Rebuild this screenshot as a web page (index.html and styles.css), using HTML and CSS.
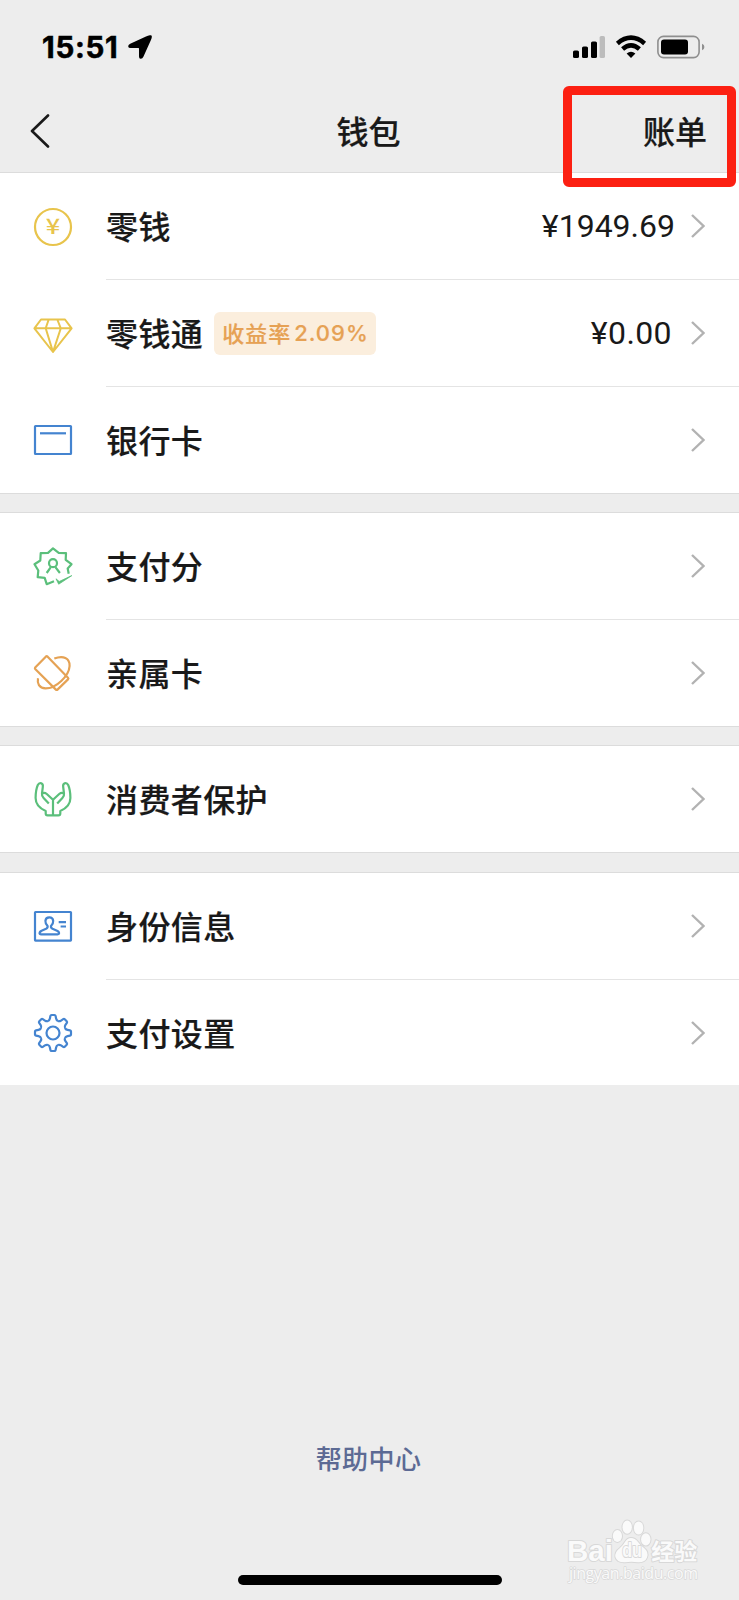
FILE: index.html
```html
<!DOCTYPE html>
<html lang="zh-CN">
<head>
    <meta charset="UTF-8">
    <meta name="viewport" content="width=device-width, initial-scale=1.0">
    <title>钱包</title>
    <link rel="stylesheet" href="styles.css">
</head>
<body>
    <div class="phone">
        <div class="status-bar">
            <span class="time">15:51</span>
            <svg class="location" width="26" height="26" viewBox="0 0 26 26">
                <path d="M22.8 1.3 Q25.4 .6 24.8 3.2 Q24.5 5 23.6 6.8 L16.4 22.8 Q15.4 25 13.6 24.8 Q12 24.5 12 22.4 V14.6 Q12 14 11.4 14 H3.6 Q1.4 14 1.2 12.4 Q1 10.8 3.2 9.8 L19 2.5 Q21 1.6 22.8 1.3 Z"/>
            </svg>
            <div class="status-icons">
                <svg width="32" height="22" viewBox="0 0 32 22">
                    <rect x="0" y="14.5" width="6" height="7.5" rx="1.6"/>
                    <rect x="9" y="10.5" width="6" height="11.5" rx="1.6"/>
                    <rect x="18" y="5.5" width="6" height="16.5" rx="1.6"/>
                    <rect x="26.6" y="0" width="5.4" height="22" rx="1.6" fill="#bcbcbc"/>
                </svg>
                <svg class="wifi" width="32" height="24" viewBox="0 0 32 24">
                    <path d="M2.4 8.4 Q16 -3 29.6 8.4 M7.6 14 Q16 6.8 24.4 14" fill="none" stroke="#000" stroke-width="4.6"/>
                    <path d="M16 23 L11.6 18.4 Q16 15 20.4 18.4 Z"/>
                </svg>
                <svg width="48" height="24" viewBox="0 0 48 24">
                    <rect x=".9" y="1.4" width="41.2" height="21.2" rx="5.6" fill="none" stroke="#8f8f8f" stroke-width="1.6"/>
                    <rect x="4" y="4.6" width="27" height="15" rx="3"/>
                    <path d="M45 8.8 Q47.4 9.6 47.4 12 Q47.4 14.4 45 15.2 Z" fill="#8f8f8f"/>
                </svg>
            </div>
        </div>

        <div class="nav-bar">
            <svg class="back" width="20" height="34" viewBox="0 0 20 34">
                <path d="M18 1.5 L2 17 L18 32.5"/>
            </svg>
            <h1 class="title">钱包</h1>
            <a class="bill">账单</a>
            <div class="highlight"></div>
        </div>

        <div class="group">
            <div class="row">
                <svg class="icon yellow" viewBox="0 0 40 40">
                    <circle cx="20" cy="20" r="18"/>
                    <text class="yen" x="12.8" y="27" textLength="14.4" lengthAdjust="spacingAndGlyphs">¥</text>
                </svg>
                <div class="cell">
                    <span class="label">零钱</span>
                    <span class="amount">¥1949.69</span>
                    <svg class="arrow" viewBox="0 0 14 24"><path d="M1 1 L12.5 12 L1 23"/></svg>
                </div>
            </div>
            <div class="row">
                <svg class="icon yellow thin" viewBox="0 0 40 40">
                    <path d="M8 5.5 H32 L38.6 14.3 L20 38 L1.4 14.3 Z M1.4 14.3 H38.6 M15.7 5.5 L12.7 14.3 L20 38 L27.8 14.3 L24.3 5.5"/>
                </svg>
                <div class="cell">
                    <span class="label">零钱通</span>
                    <span class="tag"><span class="tag-text">收益率</span><span class="rate">2.09%</span></span>
                    <span class="amount zero">¥0.00</span>
                    <svg class="arrow" viewBox="0 0 14 24"><path d="M1 1 L12.5 12 L1 23"/></svg>
                </div>
            </div>
            <div class="row">
                <svg class="icon blue" viewBox="0 0 40 40">
                    <rect x="2" y="6" width="36" height="28" rx=".5"/>
                    <path d="M7 13.3 H33"/>
                </svg>
                <div class="cell">
                    <span class="label">银行卡</span>
                    <svg class="arrow" viewBox="0 0 14 24"><path d="M1 1 L12.5 12 L1 23"/></svg>
                </div>
            </div>
        </div>

        <div class="group">
            <div class="row">
                <svg class="icon green" viewBox="0 0 40 40">
                    <path d="M21 34.2 L13.7 37.2 L11.7 30.8 L4.7 30.2 L5.3 23.5 L1.5 17.2 L7.3 13.5 L7.7 6.2 L15 5.8 L20 1.4 L25.7 5.8 L33 6.2 L32.7 12.8 L38.5 17.2 L34.7 21.5 L35.7 26.8"/>
                    <circle cx="20" cy="16.2" r="4"/>
                    <path d="M13.7 26 L17.8 20.2 M26.9 26 L22.4 20.2"/>
                    <path class="solid" d="M23 31.8 L26.2 34.5 L38.8 28.6 L25.7 37.2 Z"/>
                </svg>
                <div class="cell">
                    <span class="label">支付分</span>
                    <svg class="arrow" viewBox="0 0 14 24"><path d="M1 1 L12.5 12 L1 23"/></svg>
                </div>
            </div>
            <div class="row">
                <svg class="icon orange" viewBox="0 0 40 40">
                    <path d="M13 3.4 L2.2 14.4 Q1.6 15.2 2.2 16 L22.9 36.6 Q23.7 37.4 24.5 36.6 L35 26.4 Q35.8 25.6 35 24.8 L14.4 3.4 Q13.7 2.8 13 3.4 Z"/>
                    <path d="M21.3 5.6 C30 2 37 5 36.6 13 C36 23 23 35.5 12.5 35.4 C6 35 4 30.5 5 25.3"/>
                </svg>
                <div class="cell">
                    <span class="label">亲属卡</span>
                    <svg class="arrow" viewBox="0 0 14 24"><path d="M1 1 L12.5 12 L1 23"/></svg>
                </div>
            </div>
        </div>

        <div class="group">
            <div class="row">
                <svg class="icon green" viewBox="0 0 40 40">
                    <path d="M20 36.3 H14.5 Q12.7 36.3 12.7 34.5 V32 C7 29.5 2.6 25.5 2.6 19 Q2.6 11 4.8 6 Q6 3.6 8.3 4.2 Q10.3 5 9.8 8 L9 14.5 Q11.5 13.2 13.8 15 L20 20.8 V36.3 M9 14.5 Q8.6 17 10.6 19 L15.8 24.6"/>
                    <path d="M20 36.3 H25.5 Q27.3 36.3 27.3 34.5 V32 C33 29.5 37.4 25.5 37.4 19 Q37.4 11 35.2 6 Q34 3.6 31.7 4.2 Q29.7 5 30.2 8 L31 14.5 Q28.5 13.2 26.2 15 L20 20.8 M31 14.5 Q31.4 17 29.4 19 L24.2 24.6"/>
                </svg>
                <div class="cell">
                    <span class="label">消费者保护</span>
                    <svg class="arrow" viewBox="0 0 14 24"><path d="M1 1 L12.5 12 L1 23"/></svg>
                </div>
            </div>
        </div>

        <div class="group last">
            <div class="row">
                <svg class="icon blue" viewBox="0 0 40 40">
                    <rect x="2" y="5" width="36" height="28.6" rx=".5"/>
                    <path d="M14.6 19.1 Q12.2 16.5 12.4 13.8 Q12.8 10.3 16.3 10.3 Q19.9 10.3 20.2 13.8 Q20.4 16.5 18 19.1 Q17.6 20.9 19.5 21.8 L24 23.7 Q26.4 24.9 26 26.7 Q25.6 27.3 24.6 27.3 H8 Q6.8 27.3 6.6 26.7 Q6.3 24.9 8.6 23.7 L13.1 21.8 Q15 20.9 14.6 19.1 Z M25.7 15.2 H33 M27.6 19.5 H33"/>
                </svg>
                <div class="cell">
                    <span class="label">身份信息</span>
                    <svg class="arrow" viewBox="0 0 14 24"><path d="M1 1 L12.5 12 L1 23"/></svg>
                </div>
            </div>
            <div class="row">
                <svg class="icon blue" viewBox="0 0 40 40">
                    <defs>
                        <path id="tooth" d="M-5 -12 C-3.7 -12.5 -3.4 -13 -3.1 -14.5 L-2.6 -17 Q-2.4 -18 -1.4 -18 H1.4 Q2.4 -18 2.6 -17 L3.1 -14.5 C3.4 -13 3.7 -12.5 5 -12"/>
                    </defs>
                    <g transform="translate(20 20)">
                        <circle r="6.5"/>
                        <use href="#tooth"/>
                        <use href="#tooth" transform="rotate(45)"/>
                        <use href="#tooth" transform="rotate(90)"/>
                        <use href="#tooth" transform="rotate(135)"/>
                        <use href="#tooth" transform="rotate(180)"/>
                        <use href="#tooth" transform="rotate(225)"/>
                        <use href="#tooth" transform="rotate(270)"/>
                        <use href="#tooth" transform="rotate(315)"/>
                    </g>
                </svg>
                <div class="cell">
                    <span class="label">支付设置</span>
                    <svg class="arrow" viewBox="0 0 14 24"><path d="M1 1 L12.5 12 L1 23"/></svg>
                </div>
            </div>
        </div>

        <div class="footer">
            <a class="help">帮助中心</a>
            <div class="home-bar"></div>
        </div>

        <svg class="watermark" width="140" height="74" viewBox="0 0 140 74">
            <text class="wm-bold" x="4" y="46.7" font-size="30" textLength="46" lengthAdjust="spacingAndGlyphs">Bai</text>
            <ellipse cx="54.4" cy="22" rx="4.6" ry="6"/>
            <ellipse cx="64.2" cy="13.2" rx="4.7" ry="6.6"/>
            <ellipse cx="75.6" cy="14" rx="4.7" ry="6.6"/>
            <ellipse cx="82.8" cy="25.4" rx="4.7" ry="6.2"/>
            <path d="M68 24 Q72 24 75 28 Q77 31 81 34 Q86 38 84 43.5 Q82 48.6 75 48.2 Q68 47.4 62 48.2 Q54 48.6 52.4 43 Q51.6 38 57 34 Q60 31.5 62 28 Q64.5 24 68 24 Z"/>
            <text class="wm-bold" x="59.3" y="43.3" font-size="21" textLength="19.6" lengthAdjust="spacingAndGlyphs">du</text>
            <text class="wm-cn" x="88.3" y="45.5" font-size="23" textLength="46">经验</text>
            <text class="wm-url" x="6" y="64.6" font-size="16" textLength="129">jingyan.baidu.com</text>
        </svg>
    </div>
</body>
</html>
```
FILE: styles.css
```css
* {
    box-sizing: border-box;
}

body {
    margin: 0;
    font-family: "Noto Sans CJK SC", sans-serif;
    color: #191919;
    background-color: #ededed;
}

.phone {
    position: relative;
    display: flex;
    flex-direction: column;
    width: 739px;
    height: 1600px;
    overflow: hidden;
}

/* status bar */
.status-bar {
    display: flex;
    align-items: center;
    height: 94px;
    padding: 0 34px 0 42px;
}

.time {
    padding-bottom: 1px;
    font-family: Inter, sans-serif;
    font-size: 29.5px;
    font-weight: 700;
    line-height: 36px;
    letter-spacing: 0.7px;
    color: #000;
    -webkit-text-stroke: 0.5px #000;
}

.location {
    margin-left: 8px;
}

.status-icons {
    display: flex;
    align-items: center;
    gap: 10px;
    margin-left: auto;
}

/* nav bar */
.nav-bar {
    position: relative;
    display: grid;
    grid-template-columns: 1fr auto 1fr;
    align-items: center;
    height: 78px;
    padding: 0 32px 4px 30px;
}

.back {
    fill: none;
    stroke: #191919;
    stroke-width: 2.6;
    stroke-linecap: round;
    stroke-linejoin: round;
}

.title,
.bill {
    margin: 0;
    padding-bottom: 2px;
    font-size: 32px;
    font-weight: 500;
    line-height: 44px;
    -webkit-text-stroke: 0.2px #191919;
}

.bill {
    justify-self: end;
}

.highlight {
    position: absolute;
    top: -8px;
    left: 563px;
    width: 173px;
    height: 101px;
    border: 9px solid #fc2012;
    border-radius: 6px;
    z-index: 1;
}

/* list */
.group {
    margin-bottom: 18px;
    background-color: #fff;
    border-top: 1px solid #dcdcdc;
}

.group:nth-of-type(5) {
    margin-bottom: 19px;
}

.row {
    display: flex;
    align-items: center;
    gap: 33px;
    height: 107px;
    padding-left: 33px;
}

.cell {
    display: flex;
    flex: 1;
    align-items: center;
    height: 107px;
    padding-right: 34px;
    border-bottom: 1px solid #e4e4e4;
}

.row:last-child {
    border-bottom: 1px solid #dcdcdc;
}

.row:last-child .cell {
    height: 106px;
    border-bottom: 0;
}

.last .row:last-child {
    height: 105px;
    border-bottom: 0;
}

.label {
    padding-bottom: 1px;
    font-size: 32px;
    font-weight: 500;
    line-height: 45px;
    letter-spacing: 0.4px;
    -webkit-text-stroke: 0.2px #191919;
}

.tag {
    display: flex;
    align-items: center;
    height: 43px;
    margin-left: 11px;
    padding: 0 7px 0 8px;
    border-radius: 6px;
    background-color: #fbeedd;
    color: #e6a154;
    font-size: 22px;
    font-weight: 500;
    letter-spacing: 1px;
    -webkit-text-stroke: 0.2px #e6a154;
}

.tag-text {
    padding-bottom: 3px;
}

.rate {
    margin-left: 3px;
    font-family: Inter, sans-serif;
}

.amount {
    margin-left: auto;
    font-family: Roboto, sans-serif;
    font-size: 32px;
    line-height: 40px;
}

.zero {
    letter-spacing: 0.4px;
}

.arrow {
    width: 14px;
    height: 24px;
    margin-left: auto;
    fill: none;
    stroke: #b2b2b2;
    stroke-width: 2.4;
}

.amount + .arrow {
    margin-left: 16px;
}

.zero + .arrow {
    margin-left: 19px;
}

/* icons */
.icon {
    flex: none;
    width: 40px;
    height: 40px;
    fill: none;
    stroke: currentColor;
    stroke-width: 2.2;
    stroke-linejoin: round;
}

.thin {
    stroke-width: 2;
}

.yellow {
    color: #e8c44c;
}

.blue {
    color: #4484d0;
}

.green {
    color: #5bbf7b;
}

.orange {
    color: #e5a254;
}

.solid {
    fill: currentColor;
    stroke-width: 0.8;
}

.yen {
    fill: currentColor;
    stroke: none;
    font-size: 21px;
    font-weight: 500;
}

/* footer */
.footer {
    display: flex;
    flex: 1;
    flex-direction: column;
    align-items: center;
    justify-content: flex-end;
    padding-bottom: 15px;
}

.help {
    margin: 0 2px 97px 0;
    color: #5c6a94;
    font-size: 26px;
    font-weight: 500;
    line-height: 40px;
    letter-spacing: 0.4px;
}

.home-bar {
    width: 264px;
    height: 10px;
    border-radius: 5px;
    background-color: #000;
}

.watermark {
    position: absolute;
    right: 36px;
    bottom: 12px;
    fill: #fafafa;
    stroke: #d8d8d8;
    stroke-width: 2;
    stroke-linejoin: round;
    paint-order: stroke;
}

.wm-bold {
    font-family: "Liberation Sans", sans-serif;
    font-weight: 700;
}

.wm-cn {
    font-weight: 700;
}

.wm-url {
    font-family: "Open Sans", sans-serif;
    stroke-width: 1.4;
}
```
